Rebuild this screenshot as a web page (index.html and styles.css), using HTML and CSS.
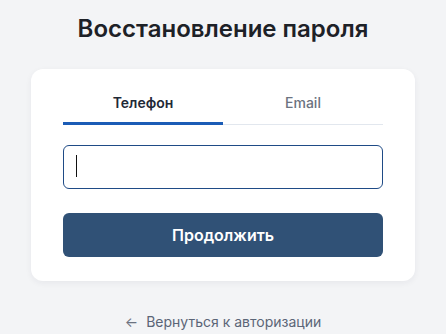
FILE: index.html
```html
<!DOCTYPE html>
<html lang="ru">
<head>
<meta charset="utf-8">
<link rel="stylesheet" href="styles.css">
</head>
<body>
<main class="page">
  <h1 class="title">Восстановление пароля</h1>
  <section class="card">
    <div class="tabs">
      <button class="tab tab-active" type="button">Телефон</button>
      <button class="tab" type="button">Email</button>
    </div>
    <div class="field">
      <input class="input" type="tel" aria-label="Телефон">
      <span class="caret"></span>
    </div>
    <button class="submit" type="button">Продолжить</button>
  </section>
  <a class="back" href="#"><span class="arrow">←</span>Вернуться к авторизации</a>
</main>
</body>
</html>
```

FILE: styles.css
```css
* { box-sizing: border-box; }
html, body { margin: 0; padding: 0; }
body {
  background: #f3f4f6;
  font-family: Inter, "Noto Sans", "Liberation Sans", sans-serif;
  width: 446px;
  height: 334px;
  overflow: hidden;
}
.page {
  display: flex;
  flex-direction: column;
  align-items: center;
  padding-top: 13px;
}
.title {
  margin: 0 0 24px;
  font-size: 24px;
  line-height: 32px;
  font-weight: 600;
  color: #1d2127;
  letter-spacing: 0;
}
.card {
  width: 384px;
  background: #ffffff;
  border-radius: 12px;
  padding: 24px 32px 24px;
  box-shadow: 0 2px 6px rgba(30, 40, 70, 0.06);
  display: flex;
  flex-direction: column;
}
.tabs {
  display: flex;
  box-shadow: inset 0 -1px 0 #e2e7ee;
}
.tab {
  flex: 1;
  background: none;
  border: 0;
  border-bottom: 3px solid transparent;
  padding: 0 0 9px;
  font-family: inherit;
  font-size: 14px;
  line-height: 20px;
  font-weight: 500;
  color: #6b7280;
  cursor: pointer;
}
.tab-active {
  color: #1f2937;
  font-weight: 600;
  border-bottom-color: #1b5cb6;
}
.field {
  position: relative;
  margin-top: 20px;
}
.input {
  display: block;
  width: 100%;
  height: 44px;
  border: 1px solid #1f4b86;
  border-radius: 6px;
  outline: none;
  padding: 0 12px;
  font-family: inherit;
  font-size: 16px;
  background: #fff;
  caret-color: transparent;
}
.caret {
  position: absolute;
  left: 13px;
  top: 10px;
  width: 1px;
  height: 22px;
  background: #111;
}
.submit {
  margin-top: 24px;
  height: 44px;
  border: 0;
  border-radius: 6px;
  background: #305176;
  color: #ffffff;
  font-family: inherit;
  font-size: 16px;
  font-weight: 600;
  cursor: pointer;
}
.back {
  margin-top: 31px;
  display: flex;
  align-items: center;
  gap: 8px;
  font-size: 14px;
  line-height: 20px;
  color: #5b6577;
  text-decoration: none;
}
.arrow {
  font-size: 14px;
  color: #6b7280;
}
```
